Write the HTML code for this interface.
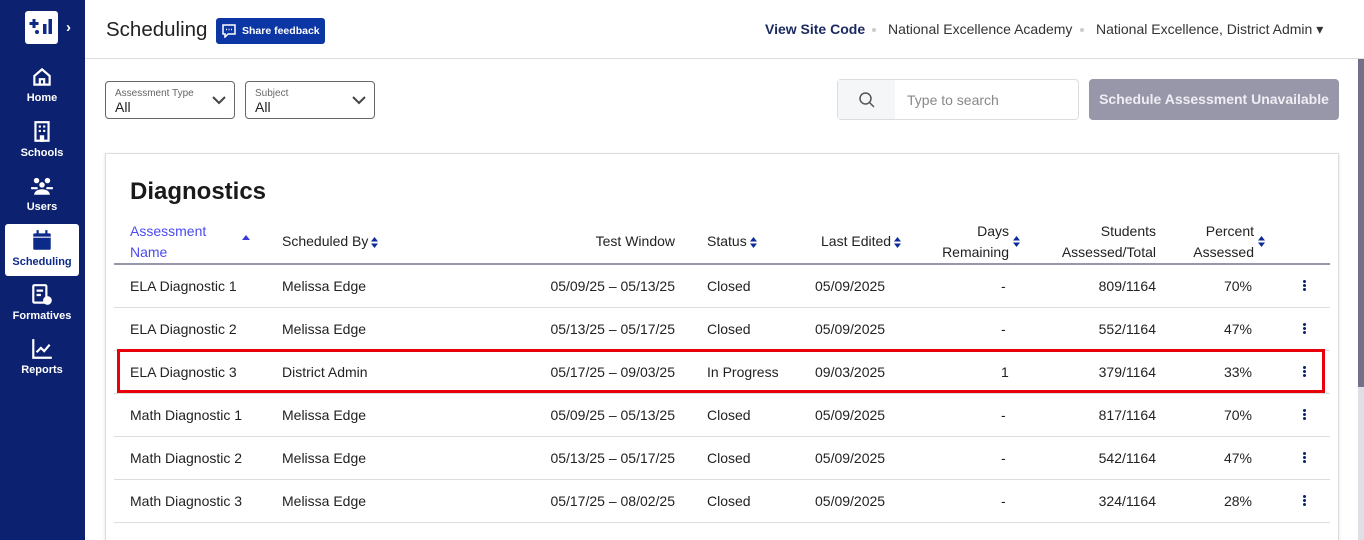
<!DOCTYPE html>
<html><head><meta charset="utf-8"><style>
*{box-sizing:border-box;margin:0;padding:0}
html,body{width:1364px;height:540px;overflow:hidden}
body{background:#fff;font-family:"Liberation Sans",Arial,sans-serif;color:#222;position:relative}
.side{position:absolute;left:0;top:0;width:85px;height:540px;background:#0c2270}
.logo{position:absolute;left:25px;top:11px;width:33px;height:33px;background:#fff;border-radius:3px}
.chev{position:absolute;left:66px;top:19px;color:#fff;font-size:15px;font-weight:bold}
.nav{position:absolute;left:5px;width:74px;height:52px;text-align:center;color:#fff;font-size:11px;font-weight:bold}
.nav svg{display:block;margin:0 auto 3px}
.nav.act{background:#fff;color:#0c2a8a;border-radius:3px}
.hdr{position:absolute;left:85px;top:0;right:0;height:59px;border-bottom:1px solid #ddd}
.title{position:absolute;left:106px;top:18px;font-size:20.5px;color:#222}
.fb{position:absolute;left:216px;top:18px;width:109px;height:26px;background:#0d36a5;border-radius:3px;color:#fff;font-size:10.5px;font-weight:bold;line-height:26px;padding-left:26px}
.top{position:absolute;top:21px;font-size:14px;color:#333}
.dot{position:absolute;top:28px;width:4px;height:4px;border-radius:2px;background:#ccc}
.sel{position:absolute;top:81px;height:38px;border:1px solid #666;border-radius:4px;padding:6px 9px}
.sel small{display:block;font-size:10px;color:#666;line-height:11px}
.sel b{font-weight:normal;font-size:14px;color:#222}
.search{position:absolute;left:837px;top:79px;width:242px;height:41px;border:1px solid #ddd;border-radius:4px;background:#fff}
.search .ic{position:absolute;left:0;top:0;width:57px;height:39px;background:#f5f6f8}
.btn{position:absolute;left:1089px;top:79px;width:250px;height:41px;background:#9896a9;border-radius:4px;color:#eeeef3;font-size:14px;font-weight:bold;text-align:center;line-height:41px}
.card{position:absolute;left:105px;top:153px;width:1234px;height:400px;border:1px solid #ddd;box-shadow:0 1px 3px rgba(0,0,0,.12)}
h1{position:absolute;left:130px;top:178px;font-size:24px;font-weight:bold;color:#1a1a1a}
.th{position:absolute;font-size:14px;color:#222;line-height:21px}
.line{position:absolute;left:114px;width:1216px}
.c{position:absolute;font-size:14px;color:#222;white-space:nowrap}
.r{text-align:right}
.sort{display:inline-block;width:7px;height:11px;vertical-align:middle;margin-left:3px}
.keb{position:absolute;left:1303px;width:3px}
.keb i{display:block;width:3px;height:3px;border-radius:2px;background:#0c2270;margin-bottom:1px}
</style></head><body>
<div class="side">
 <div class="logo"><svg width="33" height="33" viewBox="0 0 33 33"><path d="M9 8v9M4.5 12.5h9" stroke="#0c2a8a" stroke-width="3"/><rect x="18" y="13" width="3.5" height="10" fill="#0c2a8a"/><rect x="23.5" y="8" width="3.5" height="15" fill="#0c2a8a"/><circle cx="12" cy="21" r="2" fill="#0c2a8a"/></svg></div>
 <div class="chev">›</div>
 <div class="nav" style="top:65px"><svg width="24" height="24" viewBox="0 0 22 22"><path d="M4 10L11 4l7 6v8H4z M9 18v-5h4v5" fill="none" stroke="#fff" stroke-width="2"/></svg>Home</div>
 <div class="nav" style="top:120px"><svg width="24" height="24" viewBox="0 0 22 22"><rect x="5" y="2" width="12" height="17" fill="none" stroke="#fff" stroke-width="2"/><path d="M8 6h2M12 6h2M8 10h2M12 10h2M10 15h2v4h-2z" stroke="#fff" stroke-width="2"/></svg>Schools</div>
 <div class="nav" style="top:174px"><svg width="24" height="24" viewBox="0 0 22 22"><circle cx="6" cy="6" r="2.5" fill="#fff"/><circle cx="16" cy="6" r="2.5" fill="#fff"/><circle cx="11" cy="10" r="2.5" fill="#fff"/><path d="M1 13h6M15 13h6M5 18c1-4 11-4 12 0z" stroke="#fff" stroke-width="2" fill="#fff"/></svg>Users</div>
 <div class="nav act" style="top:224px;height:52px;padding-top:5px"><svg width="24" height="24" viewBox="0 0 22 22"><rect x="3" y="4" width="16" height="15" rx="1" fill="#0c2a8a"/><path d="M7 1v4M15 1v4" stroke="#0c2a8a" stroke-width="2"/><rect x="3" y="7" width="16" height="1" fill="#fff"/></svg>Scheduling</div>
 <div class="nav" style="top:283px"><svg width="24" height="24" viewBox="0 0 22 22"><rect x="3" y="2" width="12" height="16" rx="1" fill="none" stroke="#fff" stroke-width="2"/><path d="M6 7h6M6 11h4" stroke="#fff" stroke-width="2"/><circle cx="16" cy="16" r="4" fill="#fff"/></svg>Formatives</div>
 <div class="nav" style="top:337px"><svg width="24" height="24" viewBox="0 0 22 22"><path d="M3 2v17h17" fill="none" stroke="#fff" stroke-width="2"/><path d="M6 14l4-4 3 3 5-6" fill="none" stroke="#fff" stroke-width="2"/></svg>Reports</div>
</div>
<div class="hdr"></div>
<div class="title">Scheduling</div>
<div class="fb"><svg style="position:absolute;left:6px;top:6px" width="14" height="14" viewBox="0 0 14 14"><path d="M1 1h12v9H6l-3 3v-3H1z" fill="none" stroke="#fff" stroke-width="1.5"/><path d="M4 5.5h1M6.5 5.5h1M9 5.5h1" stroke="#fff" stroke-width="1.5"/></svg>Share feedback</div>
<div class="top" style="left:765px;color:#1a2a5e;font-weight:bold">View Site Code</div>
<div class="dot" style="left:872px"></div>
<div class="top" style="left:888px">National Excellence Academy</div>
<div class="dot" style="left:1080px"></div>
<div class="top" style="left:1096px">National Excellence, District Admin ▾</div>
<div style="position:absolute;left:1358px;top:59px;width:6px;height:328px;background:#737089"></div>
<div style="position:absolute;left:1358px;top:387px;width:6px;height:153px;background:#e0dfe6"></div>

<div class="sel" style="left:105px;width:130px"><small>Assessment Type</small><b>All</b><svg style="position:absolute;right:8px;top:14px" width="14" height="9"><path d="M1 1l6 6 6-6" fill="none" stroke="#444" stroke-width="2"/></svg></div>
<div class="sel" style="left:245px;width:130px"><small>Subject</small><b>All</b><svg style="position:absolute;right:8px;top:14px" width="14" height="9"><path d="M1 1l6 6 6-6" fill="none" stroke="#444" stroke-width="2"/></svg></div>
<div class="search"><div class="ic"><svg style="position:absolute;left:21px;top:12px" width="16" height="16"><circle cx="6.5" cy="6.5" r="5.5" fill="none" stroke="#555" stroke-width="1.5"/><path d="M10.5 10.5l4.5 4.5" stroke="#555" stroke-width="1.5"/></svg></div><span style="position:absolute;left:69px;top:12px;font-size:14px;color:#888">Type to search</span></div>
<div class="btn">Schedule Assessment Unavailable</div>

<div class="card"></div>
<h1>Diagnostics</h1>
<div class="th" style="left:130px;top:221px;color:#4a4af0">Assessment<br>Name</div>
<svg style="position:absolute;left:242px;top:235px" width="8" height="5"><path d="M0 5L4 0l4 5z" fill="#3a3ad8"/></svg>
<div class="th" style="left:282px;top:231px">Scheduled By<svg class="sort" viewBox="0 0 7 11"><path d="M0 4.5L3.5 0 7 4.5zM0 6.5L3.5 11 7 6.5z" fill="#0c2a9a"/></svg></div>
<div class="th r" style="left:560px;width:115px;top:231px">Test Window</div>
<div class="th" style="left:707px;top:231px">Status<svg class="sort" viewBox="0 0 7 11"><path d="M0 4.5L3.5 0 7 4.5zM0 6.5L3.5 11 7 6.5z" fill="#0c2a9a"/></svg></div>
<div class="th" style="left:821px;top:231px">Last Edited<svg class="sort" viewBox="0 0 7 11"><path d="M0 4.5L3.5 0 7 4.5zM0 6.5L3.5 11 7 6.5z" fill="#0c2a9a"/></svg></div>
<div class="th r" style="left:920px;width:89px;top:221px">Days<br>Remaining</div>
<svg style="position:absolute;left:1013px;top:236px" width="7" height="11"><path d="M0 4.5L3.5 0 7 4.5zM0 6.5L3.5 11 7 6.5z" fill="#0c2a9a"/></svg>
<div class="th r" style="left:1040px;width:116px;top:221px">Students<br>Assessed/Total</div>
<div class="th r" style="left:1170px;width:84px;top:221px">Percent<br>Assessed</div>
<svg style="position:absolute;left:1258px;top:236px" width="7" height="11"><path d="M0 4.5L3.5 0 7 4.5zM0 6.5L3.5 11 7 6.5z" fill="#0c2a9a"/></svg>
<div class="line" style="top:263px;height:2px;background:#9896a9"></div>

<div class="line" style="top:307px;height:1px;background:#ddd"></div>
<div class="line" style="top:350px;height:1px;background:#ddd"></div>
<div class="line" style="top:393px;height:1px;background:#ddd"></div>
<div class="line" style="top:436px;height:1px;background:#ddd"></div>
<div class="line" style="top:479px;height:1px;background:#ddd"></div>
<div class="line" style="top:522px;height:1px;background:#ddd"></div>

<div class="c" style="left:130px;top:278px">ELA Diagnostic 1</div><div class="c" style="left:282px;top:278px">Melissa Edge</div><div class="c r" style="right:689px;top:278px">05/09/25 – 05/13/25</div><div class="c" style="left:707px;top:278px">Closed</div><div class="c" style="left:815px;top:278px">05/09/2025</div><div class="c" style="left:1001px;top:278px">-</div><div class="c r" style="right:208px;top:278px">809/1164</div><div class="c r" style="right:112px;top:278px">70%</div><div class="keb" style="top:280px"><i></i><i></i><i></i></div>
<div class="c" style="left:130px;top:321px">ELA Diagnostic 2</div><div class="c" style="left:282px;top:321px">Melissa Edge</div><div class="c r" style="right:689px;top:321px">05/13/25 – 05/17/25</div><div class="c" style="left:707px;top:321px">Closed</div><div class="c" style="left:815px;top:321px">05/09/2025</div><div class="c" style="left:1001px;top:321px">-</div><div class="c r" style="right:208px;top:321px">552/1164</div><div class="c r" style="right:112px;top:321px">47%</div><div class="keb" style="top:323px"><i></i><i></i><i></i></div>
<div class="c" style="left:130px;top:364px">ELA Diagnostic 3</div><div class="c" style="left:282px;top:364px">District Admin</div><div class="c r" style="right:689px;top:364px">05/17/25 – 09/03/25</div><div class="c" style="left:707px;top:364px">In Progress</div><div class="c" style="left:815px;top:364px">09/03/2025</div><div class="c" style="left:1001px;top:364px">1</div><div class="c r" style="right:208px;top:364px">379/1164</div><div class="c r" style="right:112px;top:364px">33%</div><div class="keb" style="top:366px"><i></i><i></i><i></i></div>
<div class="c" style="left:130px;top:407px">Math Diagnostic 1</div><div class="c" style="left:282px;top:407px">Melissa Edge</div><div class="c r" style="right:689px;top:407px">05/09/25 – 05/13/25</div><div class="c" style="left:707px;top:407px">Closed</div><div class="c" style="left:815px;top:407px">05/09/2025</div><div class="c" style="left:1001px;top:407px">-</div><div class="c r" style="right:208px;top:407px">817/1164</div><div class="c r" style="right:112px;top:407px">70%</div><div class="keb" style="top:409px"><i></i><i></i><i></i></div>
<div class="c" style="left:130px;top:450px">Math Diagnostic 2</div><div class="c" style="left:282px;top:450px">Melissa Edge</div><div class="c r" style="right:689px;top:450px">05/13/25 – 05/17/25</div><div class="c" style="left:707px;top:450px">Closed</div><div class="c" style="left:815px;top:450px">05/09/2025</div><div class="c" style="left:1001px;top:450px">-</div><div class="c r" style="right:208px;top:450px">542/1164</div><div class="c r" style="right:112px;top:450px">47%</div><div class="keb" style="top:452px"><i></i><i></i><i></i></div>
<div class="c" style="left:130px;top:493px">Math Diagnostic 3</div><div class="c" style="left:282px;top:493px">Melissa Edge</div><div class="c r" style="right:689px;top:493px">05/17/25 – 08/02/25</div><div class="c" style="left:707px;top:493px">Closed</div><div class="c" style="left:815px;top:493px">05/09/2025</div><div class="c" style="left:1001px;top:493px">-</div><div class="c r" style="right:208px;top:493px">324/1164</div><div class="c r" style="right:112px;top:493px">28%</div><div class="keb" style="top:495px"><i></i><i></i><i></i></div>

<div style="position:absolute;left:117px;top:349px;width:1208px;height:44px;border:3px solid #e8000b"></div>
</body></html>
